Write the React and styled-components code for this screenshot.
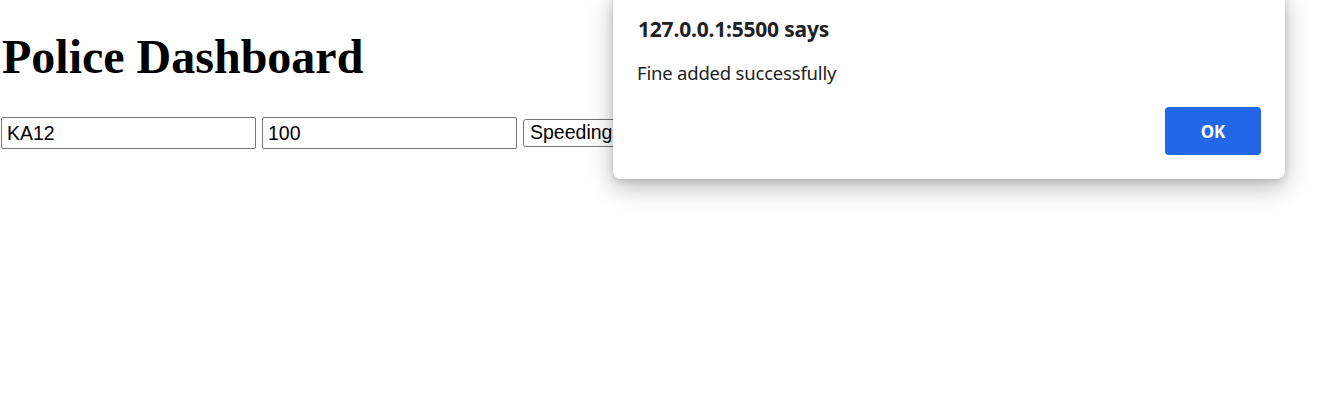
import React from "react";
import styled, { createGlobalStyle } from "styled-components";

const Global = createGlobalStyle`
  html, body { margin: 0; padding: 0; background: #fff; }
  body { font-family: "Liberation Serif", "Times New Roman", serif; }
`;

const Page = styled.div`
  position: relative;
  width: 1324px;
  height: 414px;
  overflow: hidden;
`;

const Title = styled.h1`
  font-family: "Liberation Serif", "Times New Roman", serif;
  font-size: 48px;
  font-weight: bold;
  margin: 33px 0 36px 2px;
  line-height: 48px;
  color: #000;
`;

const Form = styled.div`
  display: flex;
  align-items: center;
  gap: 6px;
  padding-left: 1px;
`;

const Input = styled.input`
  width: 255px;
  height: 32px;
  box-sizing: border-box;
  font-family: "Liberation Sans", Arial, sans-serif;
  font-size: 19.5px;
  padding: 2px 5px;
  border: 1px solid #767676;
  border-radius: 2px;
  color: #000;
  outline: none;
`;

const Select = styled.button`
  height: 28px;
  box-sizing: border-box;
  font-family: "Liberation Sans", Arial, sans-serif;
  font-size: 19.5px;
  padding: 0 6px;
  border: 1px solid #767676;
  border-radius: 3px;
  background: #fff;
  color: #000;
  margin-top: -1px;
`;

const Dialog = styled.div`
  position: absolute;
  left: 613px;
  top: -10px;
  width: 672px;
  box-sizing: border-box;
  background: #fff;
  border-radius: 8px;
  box-shadow: 0 8px 24px rgba(0, 0, 0, 0.28), 0 2px 6px rgba(0, 0, 0, 0.12);
  padding: 25px 24px 24px 24px;
  font-family: "Noto Sans", "Open Sans", sans-serif;
  color: #202124;
  display: flex;
  flex-direction: column;
`;

const DialogTitle = styled.div`
  font-size: 21px;
  font-weight: bold;
  line-height: 28px;
  margin-left: 1px;
  letter-spacing: -0.2px;
`;

const DialogMessage = styled.div`
  font-size: 18.5px;
  line-height: 24px;
  margin-top: 18px;
  letter-spacing: -0.2px;
`;

const Actions = styled.div`
  display: flex;
  justify-content: flex-end;
  margin-top: 22px;
`;

const OkButton = styled.button`
  width: 96px;
  height: 48px;
  background: #2167e8;
  color: #fff;
  border: none;
  border-radius: 4px;
  font-family: "Noto Sans", "Open Sans", sans-serif;
  font-size: 17px;
  font-weight: bold;
`;

export default function App() {
  return (
    <>
      <Global />
      <Page>
        <Title>Police Dashboard</Title>
        <Form>
          <Input defaultValue="KA12" />
          <Input defaultValue="100" />
          <Select>Speeding</Select>
        </Form>
        <Dialog>
          <DialogTitle>127.0.0.1:5500 says</DialogTitle>
          <DialogMessage>Fine added successfully</DialogMessage>
          <Actions>
            <OkButton>OK</OkButton>
          </Actions>
        </Dialog>
      </Page>
    </>
  );
}
